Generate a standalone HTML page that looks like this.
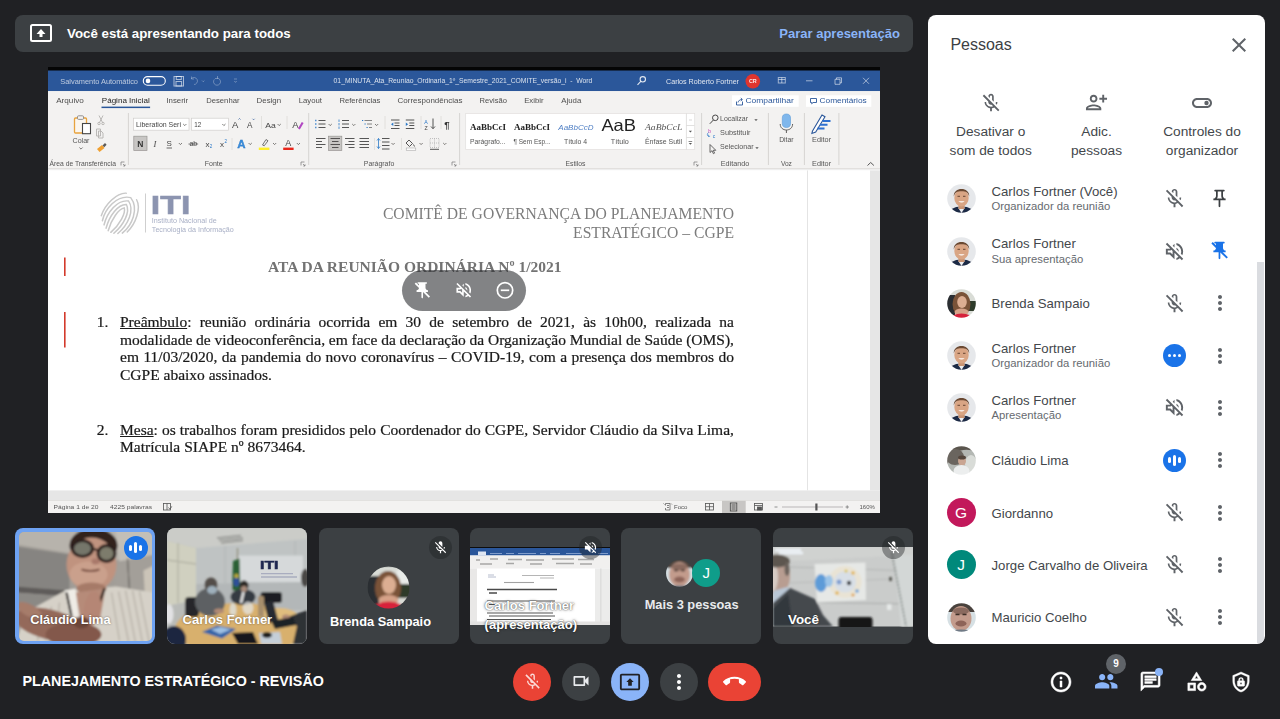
<!DOCTYPE html>
<html lang="pt-BR">
<head>
<meta charset="utf-8">
<title>Meet - PLANEJAMENTO ESTRATÉGICO - REVISÃO</title>
<style>
*{box-sizing:border-box;margin:0;padding:0}
html,body{width:1280px;height:719px;overflow:hidden;background:#202124}
body{position:relative;font-family:"Liberation Sans",sans-serif;color:#fff}
.abs{position:absolute}
/* banner */
#banner{left:15px;top:15px;width:898px;height:37px;background:#3c4043;border-radius:8px}
#banner .t1{left:52px;top:10.500px;font-size:13.300px;font-weight:bold;color:#fff;white-space:nowrap}
#banner .t2{right:13px;top:11px;font-size:13px;font-weight:bold;color:#8ab4f8;white-space:nowrap}
/* word window */
#word{left:48px;top:67px;width:832px;height:446px;background:#fff;overflow:hidden}
/* tiles */
.tile{top:528px;width:140px;height:116px;border-radius:8px;background:#3c4043;overflow:hidden}
.tile .nm{font-weight:bold;font-size:13px;color:#fff;white-space:nowrap;text-shadow:0 0 2px rgba(0,0,0,.5)}
/* bottom bar */
#title{left:22.500px;top:673px;font-size:14.300px;font-weight:bold;color:#fff;white-space:nowrap}
.cbtn{top:663px;width:38px;height:38px;border-radius:19px}
/* panel */
#panel{left:928px;top:15px;width:337px;height:629px;background:#fff;border-radius:8px;color:#202124;overflow:hidden}
.doc{font-family:"Liberation Serif",serif;font-size:15.5px;line-height:17.83px;color:#1a1a1a;white-space:nowrap;-webkit-text-stroke:0.22px #1a1a1a}
.doc .hd{color:#7c7c7c;font-size:15.670px;-webkit-text-stroke:0}
.doc .jl{left:72px;white-space:nowrap}
#pill{left:354px;top:203px;width:124px;height:41px;border-radius:20.5px;background:rgba(40,41,44,.58)}
.badge{width:23px;height:23px;border-radius:12px;background:rgba(32,33,36,.42)}
.pl{top:108px;width:120px;text-align:center;font-size:13.700px;line-height:18.900px;color:#43474b}
.row{left:-1px;width:338px;height:0}
.av{left:19.500px;top:-14.500px;width:29px;height:29px;border-radius:15px;color:#fff;font-size:15.500px;text-align:center;line-height:29.500px}
.rn{left:64.500px;font-size:13.200px;color:#43474b;white-space:nowrap}
.rs{left:64.500px;font-size:11.300px;color:#666a6f;white-space:nowrap}
.dt{top:9.700px;width:3.600px;height:3.600px;border-radius:2px;background:#fff}
.br{width:3px;border-radius:1.500px;background:#fff}

</style>
</head>
<body>
<svg width="0" height="0" style="position:absolute">
<defs>
<symbol id="i-micoff" viewBox="0 0 24 24"><path d="M19 11h-1.700c0 .740-.160 1.430-.430 2.050l1.230 1.230c.560-.980.900-2.090.900-3.280zm-4.020.170c0-.060.020-.110.020-.170V5c0-1.660-1.340-3-3-3S9 3.340 9 5v.180l5.980 5.990zM4.270 3L3 4.270l6.010 6.010V11c0 1.660 1.330 3 2.990 3 .220 0 .440-.030.650-.080l1.660 1.660c-.710.330-1.500.520-2.310.520-2.760 0-5.300-2.100-5.300-5.100H5c0 3.410 2.720 6.230 6 6.720V21h2v-3.280c.910-.130 1.770-.450 2.540-.900L19.730 21 21 19.730 4.270 3z"/></symbol>
<symbol id="i-micoff-o" viewBox="0 0 24 24"><path d="M10.800 4.900c0-.660.540-1.200 1.200-1.200s1.200.540 1.200 1.200l-.010 3.910L15 10.600V5c0-1.660-1.340-3-3-3-1.540 0-2.790 1.160-2.960 2.650l1.760 1.760V4.900zM19 11h-1.700c0 .580-.100 1.130-.270 1.640l1.270 1.270c.440-.880.700-1.870.700-2.910zM4.410 2.860L3 4.270l6 6V11c0 1.660 1.340 3 3 3 .230 0 .440-.030.650-.080l1.660 1.660c-.710.330-1.500.520-2.310.520-2.760 0-5.300-2.100-5.300-5.100H5c0 3.410 2.720 6.230 6 6.720V21h2v-3.280c.910-.130 1.770-.450 2.550-.900l4.200 4.200 1.410-1.410L4.410 2.860z"/></symbol>
<symbol id="i-voloff" viewBox="0 0 24 24"><path d="M16.500 12c0-1.770-1.020-3.290-2.500-4.030v2.210l2.450 2.450c.030-.200.050-.410.050-.630zm2.500 0c0 .940-.200 1.820-.540 2.640l1.510 1.510C20.630 14.910 21 13.500 21 12c0-4.280-2.990-7.860-7-8.770v2.060c2.890.860 5 3.540 5 6.710zM4.270 3L3 4.270 7.730 9H3v6h4l5 5v-6.730l4.250 4.250c-.670.520-1.420.930-2.250 1.180v2.060c1.380-.310 2.630-.950 3.690-1.810L19.730 21 21 19.730l-9-9L4.270 3zM12 4L9.910 6.090 12 8.180V4z"/></symbol>
<symbol id="i-voloff-o" viewBox="0 0 24 24"><path d="M4.340 2.930L2.930 4.340 7.290 8.700 7 9H3v6h4l5 5v-6.590l4.180 4.180c-.650.490-1.380.880-2.180 1.110v2.060c1.340-.300 2.570-.920 3.610-1.750l2.050 2.050 1.410-1.410L4.340 2.930zM10 15.170L7.830 13H5v-2h2.830l.880-.880L10 11.410v3.760zM19 12c0 .820-.150 1.610-.410 2.340l1.530 1.530c.560-1.170.880-2.480.880-3.870 0-4.280-2.990-7.860-7-8.770v2.060c2.890.860 5 3.540 5 6.710zm-7-8l-1.880 1.880L12 7.760zm4.500 8c0-1.770-1.020-3.290-2.500-4.030v1.790l2.480 2.480c.010-.080.020-.160.020-.240z"/></symbol>
<symbol id="i-pin-o" viewBox="0 0 24 24"><path d="M14 4v5c0 1.120.370 2.160 1 3H9c.650-.860 1-1.900 1-3V4h4m3-2H7c-.550 0-1 .450-1 1s.450 1 1 1h1v5c0 1.660-1.340 3-3 3v2h5.970v7l1 1 1-1v-7H19v-2c-1.660 0-3-1.340-3-3V4h1c.550 0 1-.450 1-1s-.450-1-1-1z"/></symbol>
<symbol id="i-pinoff" viewBox="0 0 24 24"><path d="M16 9V4h1c.550 0 1-.450 1-1s-.450-1-1-1H7c-.550 0-1 .450-1 1s.450 1 1 1h1v5c0 1.660-1.340 3-3 3v2h5.970v7l1 1 1-1v-7H19v-2c-1.660 0-3-1.340-3-3z"/><path d="M3.500 3.200L20.800 20.500" stroke="currentColor" stroke-width="2.200" fill="none"/></symbol>
<symbol id="i-more" viewBox="0 0 24 24"><path d="M12 8c1.100 0 2-.900 2-2s-.900-2-2-2-2 .900-2 2 .900 2 2 2zm0 2c-1.100 0-2 .900-2 2s.900 2 2 2 2-.900 2-2-.900-2-2-2zm0 6c-1.100 0-2 .900-2 2s.900 2 2 2 2-.900 2-2-.900-2-2-2z"/></symbol>
<symbol id="i-cam" viewBox="0 0 24 24"><path d="M15 8v8H5V8h10m1-2H4c-.550 0-1 .450-1 1v10c0 .550.450 1 1 1h12c.550 0 1-.450 1-1v-3.500l4 4v-11l-4 4V7c0-.550-.450-1-1-1z"/></symbol>
<symbol id="i-callend" viewBox="0 0 24 24"><path d="M12 9c-1.600 0-3.150.250-4.600.720v3.100c0 .390-.230.740-.560.900-.980.490-1.870 1.120-2.660 1.850-.180.180-.430.280-.700.280-.280 0-.530-.110-.710-.290L.290 13.080c-.180-.170-.290-.420-.290-.700 0-.280.110-.530.290-.710C3.340 8.780 7.460 7 12 7s8.660 1.780 11.710 4.670c.180.180.290.430.290.710 0 .280-.110.530-.290.710l-2.480 2.480c-.180.180-.430.290-.710.290-.270 0-.520-.110-.700-.280-.790-.740-1.690-1.360-2.670-1.850-.330-.160-.560-.500-.560-.900v-3.100C15.150 9.250 13.600 9 12 9z"/></symbol>
<symbol id="i-present" viewBox="0 0 24 24"><path d="M21 3H3c-1.110 0-2 .890-2 2v14c0 1.110.890 2 2 2h18c1.110 0 2-.890 2-2V5c0-1.110-.890-2-2-2zm0 16.020H3V4.980h18v14.040zM10 12H8l4-4 4 4h-2v4h-4v-4z"/></symbol>
<symbol id="i-info" viewBox="0 0 24 24"><path d="M11 7h2v2h-2zm0 4h2v6h-2zm1-9C6.480 2 2 6.480 2 12s4.480 10 10 10 10-4.480 10-10S17.520 2 12 2zm0 18c-4.410 0-8-3.590-8-8s3.590-8 8-8 8 3.590 8 8-3.590 8-8 8z"/></symbol>
<symbol id="i-people" viewBox="0 0 24 24"><path d="M16 11c1.660 0 2.990-1.340 2.990-3S17.660 5 16 5c-1.660 0-3 1.340-3 3s1.340 3 3 3zm-8 0c1.660 0 2.990-1.340 2.990-3S9.660 5 8 5C6.340 5 5 6.340 5 8s1.340 3 3 3zm0 2c-2.330 0-7 1.170-7 3.500V19h14v-2.500c0-2.330-4.670-3.500-7-3.500zm8 0c-.290 0-.620.020-.970.050 1.160.840 1.970 1.970 1.970 3.450V19h6v-2.500c0-2.330-4.670-3.500-7-3.500z"/></symbol>
<symbol id="i-chat" viewBox="0 0 24 24"><path d="M4 4h16v12H5.170L4 17.170V4m0-2c-1.100 0-1.990.900-1.990 2L2 22l4-4h14c1.100 0 2-.900 2-2V4c0-1.100-.900-2-2-2H4zm2 10h8v2H6v-2zm0-3h12v2H6V9zm0-3h12v2H6V6z"/></symbol>
<symbol id="i-cat" viewBox="0 0 24 24"><path d="M12 2l-5.500 9h11L12 2zm0 3.840L13.930 9h-3.870L12 5.840zM17.500 13c-2.490 0-4.500 2.010-4.500 4.500s2.010 4.500 4.500 4.500 4.500-2.010 4.500-4.500-2.010-4.500-4.500-4.500zm0 7c-1.380 0-2.500-1.120-2.500-2.500s1.120-2.500 2.500-2.500 2.500 1.120 2.500 2.500-1.120 2.500-2.500 2.500zM3 21.500h8v-8H3v8zm2-6h4v4H5v-4z"/></symbol>
<symbol id="i-shield" viewBox="0 0 24 24"><path d="M12 1L3 5v6c0 5.550 3.840 10.740 9 12 5.160-1.260 9-6.450 9-12V5l-9-4zm0 2.180l7 3.120V11c0 4.520-2.980 8.690-7 9.930C7.980 19.690 5 15.520 5 11V6.300l7-3.120z"/><path d="M15 10.500h-.400V9.600a2.600 2.600 0 0 0-5.200 0v.900H9c-.550 0-1 .450-1 1v4c0 .550.450 1 1 1h6c.550 0 1-.450 1-1v-4c0-.550-.450-1-1-1zm-3 4a1 1 0 1 1 0-2 1 1 0 0 1 0 2zm1.300-4h-2.600V9.600a1.300 1.300 0 0 1 2.600 0v.900z"/></symbol>
<symbol id="i-close" viewBox="0 0 24 24"><path d="M19 6.410L17.590 5 12 10.590 6.410 5 5 6.410 10.590 12 5 17.590 6.410 19 12 13.410 17.590 19 19 17.590 13.410 12z"/></symbol>
<symbol id="i-padd" viewBox="0 0 24 24"><path d="M9 12c2.210 0 4-1.790 4-4s-1.790-4-4-4-4 1.790-4 4 1.790 4 4 4zm0-6c1.100 0 2 .900 2 2s-.900 2-2 2-2-.900-2-2 .900-2 2-2zm0 8c-2.670 0-8 1.340-8 4v2h16v-2c0-2.660-5.330-4-8-4zm-6 4c.220-.720 3.310-2 6-2 2.700 0 5.800 1.290 6 2H3zM20 7V4h-2v3h-3v2h3v3h2V9h3V7h-3z"/></symbol>
<symbol id="i-toggle" viewBox="0 0 24 24"><path d="M17 7H7c-2.760 0-5 2.240-5 5s2.240 5 5 5h10c2.760 0 5-2.240 5-5s-2.240-5-5-5zm0 8H7c-1.660 0-3-1.340-3-3s1.340-3 3-3h10c1.660 0 3 1.340 3 3s-1.340 3-3 3z"/><circle cx="16.500" cy="12" r="2.200"/></symbol>
<filter id="b1" x="-10%" y="-10%" width="120%" height="120%"><feGaussianBlur stdDeviation="1"/></filter>
<filter id="b2" x="-10%" y="-10%" width="120%" height="120%"><feGaussianBlur stdDeviation="2"/></filter>
<filter id="b3" x="-10%" y="-10%" width="120%" height="120%"><feGaussianBlur stdDeviation="3.500"/></filter>
<filter id="b05" x="-10%" y="-10%" width="120%" height="120%"><feGaussianBlur stdDeviation="0.600"/></filter>
</defs></svg>
<div id="banner" class="abs">
  <svg class="abs" style="left:15px;top:9px" width="22" height="18" viewBox="0 0 22 18"><rect x="1" y="1" width="20" height="16" rx="1.5" fill="none" stroke="#fff" stroke-width="2"/><path d="M11 5 L6.5 10 H9.5 V13 H12.5 V10 H15.5 Z" fill="#fff"/></svg>
  <div class="abs t1">Você está apresentando para todos</div>
  <div class="abs t2">Parar apresentação</div>
</div>

<div id="word" class="abs">
<svg class="abs" style="left:0;top:0" width="832" height="446" viewBox="0 0 832 446" font-family="Liberation Sans, sans-serif">
  <defs>
    <filter id="soft" x="-5%" y="-5%" width="110%" height="110%"><feGaussianBlur stdDeviation="0.35"/></filter>
    <g id="dd"><path d="M0 0 l1.6 1.6 l1.6 -1.6" fill="none" stroke="#605e5c" stroke-width=".8"/></g>
    <g id="lines4"><path d="M0 0h10M0 3h10M0 6h10M0 9h10" stroke="#444" stroke-width="1.1"/></g>
  </defs>
  <rect x="0" y="0" width="832" height="4" fill="#050505"/>
  <rect x="0" y="3.5" width="832" height="20.7" fill="#2b579a"/>
  <rect x="0" y="24.2" width="832" height="77.3" fill="#f3f2f1"/>
  <rect x="0" y="101.2" width="832" height="1" fill="#dcdad8"/>
  <rect x="0" y="102.2" width="832" height="1.2" fill="#ececeb"/>
  <g filter="url(#soft)">
  <!-- title bar -->
  <g fill="#fff" font-size="7.3">
    <text x="12.3" y="16.5" textLength="77.7" lengthAdjust="spacingAndGlyphs" fill-opacity=".68">Salvamento Automático</text>
    <rect x="95.3" y="9.6" width="22" height="8.6" rx="4.3" fill="none" stroke="#fff" stroke-width="1.1"/>
    <circle cx="100" cy="13.9" r="2.3" fill="#fff"/>
    <g fill="none" stroke="#fff" stroke-opacity=".6" stroke-width="1"><rect x="126" y="9.5" width="9.5" height="9.5"/><rect x="128.3" y="9.5" width="5" height="3"/><rect x="128" y="14.5" width="5.6" height="4.5"/></g>
    <g fill="none" stroke="#fff" stroke-opacity=".3" stroke-width="1"><path d="M146 17.5 a3.5 3.5 0 1 0 -2.5 -6 M143.5 9.5 v2.5 h2.5"/><path d="M154 13.5l1.2 1.2 1.2-1.2"/><path d="M169 11.2 a3.5 3.5 0 1 1 -2.6 1.2 M169.5 9 v2.5 h-2.5"/><path d="M186 12h3M186.3 14l1.2 1.4 1.2-1.4"/></g>
    <text x="285.6" y="16.3" textLength="258.8" lengthAdjust="spacingAndGlyphs" fill-opacity=".82" font-size="6.6">01_MINUTA_Ata_Reuniao_Ordinaria_1º_Semestre_2021_COMITE_versão_i&#160;&#160;-&#160;&#160;Word</text>
    <g fill="none" stroke="#fff" stroke-opacity=".85" stroke-width="1.1"><circle cx="594.8" cy="12.3" r="2.7"/><path d="M592.8 14.4l-3.3 3.4"/></g>
    <text x="618" y="17" textLength="73" lengthAdjust="spacingAndGlyphs" fill-opacity=".85" font-size="7.2">Carlos Roberto Fortner</text>
    <circle cx="704.8" cy="14.3" r="7.3" fill="#e0342f"/>
    <text x="704.8" y="16.4" text-anchor="middle" font-size="5.4" font-weight="bold" fill-opacity=".9">CR</text>
    <g fill="none" stroke="#fff" stroke-opacity=".55" stroke-width="1"><rect x="730.3" y="10.5" width="7" height="5.5"/><path d="M730.3 12.5h7M733.8 10.5v5.5"/><path d="M758 13.8h6.5"/><path d="M787 12.3h5v5h-5zM788.5 12.3v-1.5h5v5h-1.5"/><path d="M815 10.8l6 6M821 10.8l-6 6"/></g>
  </g>
  <!-- menu tabs -->
  <g fill="#4e4e4e" font-size="8">
    <text x="8.2" y="36.4" textLength="27.6" lengthAdjust="spacingAndGlyphs">Arquivo</text>
    <text x="53.8" y="36.4" textLength="47.9" lengthAdjust="spacingAndGlyphs" fill="#222">Página Inicial</text>
    <rect x="53.5" y="39.6" width="48.6" height="1.5" fill="#2b579a"/>
    <text x="118.4" y="36.4" textLength="21.8" lengthAdjust="spacingAndGlyphs">Inserir</text>
    <text x="158.2" y="36.4" textLength="33.3" lengthAdjust="spacingAndGlyphs">Desenhar</text>
    <text x="208.6" y="36.4" textLength="24.5" lengthAdjust="spacingAndGlyphs">Design</text>
    <text x="250.7" y="36.4" textLength="23.3" lengthAdjust="spacingAndGlyphs">Layout</text>
    <text x="291.4" y="36.4" textLength="41" lengthAdjust="spacingAndGlyphs">Referências</text>
    <text x="349.6" y="36.4" textLength="64.8" lengthAdjust="spacingAndGlyphs">Correspondências</text>
    <text x="431.6" y="36.4" textLength="27.4" lengthAdjust="spacingAndGlyphs">Revisão</text>
    <text x="476.2" y="36.4" textLength="19.4" lengthAdjust="spacingAndGlyphs">Exibir</text>
    <text x="513.3" y="36.4" textLength="20" lengthAdjust="spacingAndGlyphs">Ajuda</text>
    <rect x="684" y="28.3" width="66.7" height="11.5" fill="#fff"/>
    <rect x="758" y="28.3" width="65.3" height="11.5" fill="#fff"/>
    <g fill="none" stroke="#2b579a" stroke-width=".9"><path d="M688.5 34.5v3.5h6v-3.5M690 35.5c.5-2 2-3 4-3M692.8 31l1.6 1.5-1.6 1.5"/><path d="M762.5 31.5h6v4h-3.5l-1.3 1.3v-1.3h-1.2z"/></g>
    <text x="697.5" y="36.4" textLength="48.3" lengthAdjust="spacingAndGlyphs" fill="#2b579a">Compartilhar</text>
    <text x="771.5" y="36.4" textLength="47.2" lengthAdjust="spacingAndGlyphs" fill="#2b579a">Comentários</text>
  </g>
  <!-- ribbon group separators -->
  <g stroke="#d6d4d2" stroke-width="1"><path d="M80.4 46v52M260.7 46v52M411.6 46v52M653.6 46v52M720.4 46v52M756.4 46v52M790.9 46v52"/></g>
  <!-- group labels -->
  <g fill="#555" font-size="6.8">
    <text x="1.6" y="99" textLength="66.4" lengthAdjust="spacingAndGlyphs">Área de Transferência</text>
    <text x="165.7" y="99" text-anchor="middle" textLength="18" lengthAdjust="spacingAndGlyphs">Fonte</text>
    <text x="331" y="99" text-anchor="middle" textLength="30.5" lengthAdjust="spacingAndGlyphs">Parágrafo</text>
    <text x="527.5" y="99" text-anchor="middle" textLength="20" lengthAdjust="spacingAndGlyphs">Estilos</text>
    <text x="687" y="99" text-anchor="middle" textLength="28.5" lengthAdjust="spacingAndGlyphs">Editando</text>
    <text x="738.4" y="99" text-anchor="middle" textLength="11" lengthAdjust="spacingAndGlyphs">Voz</text>
    <text x="773.6" y="99" text-anchor="middle" textLength="19" lengthAdjust="spacingAndGlyphs">Editor</text>
    <g fill="none" stroke="#777" stroke-width=".7"><path d="M73 95h3.5M73 95v3.5M75 97l2 2M77 97.3v1.7h-1.7"/><path d="M253 95h3.5M253 95v3.5M255 97l2 2M257 97.3v1.7h-1.7"/><path d="M404 95h3.5M404 95v3.5M406 97l2 2M408 97.3v1.7h-1.7"/><path d="M646 95h3.5M646 95v3.5M648 97l2 2M650 97.3v1.7h-1.7"/></g>
    <path d="M819.5 98.5l3.2-3 3.2 3" fill="none" stroke="#555" stroke-width="1"/>
  </g>
  <!-- clipboard group -->
  <g>
    <rect x="26.5" y="51" width="12" height="15" rx="1" fill="#fbf6ee" stroke="#e8a33d" stroke-width="1.3"/>
    <rect x="29.5" y="48.8" width="6" height="3.6" rx="1" fill="#f3f2f1" stroke="#8a8886" stroke-width=".9"/>
    <rect x="34.5" y="56.5" width="8" height="10.2" fill="#fff" stroke="#444" stroke-width="1.1"/>
    <text x="33" y="75.500" text-anchor="middle" font-size="7.2" fill="#555" textLength="17" lengthAdjust="spacingAndGlyphs">Colar</text>
    <use href="#dd" x="31.4" y="80.500"/>
    <g fill="none" stroke="#b4b2b0" stroke-width=".9"><path d="M51 48.5l3.5 7M55 48.5l-3.5 7"/><circle cx="51" cy="56.5" r="1.2"/><circle cx="55" cy="56.5" r="1.2"/><path d="M48.5 62h4v7h-4zM50.5 64h2.5l2 2v5h-4.5z" fill="#f3f2f1"/></g>
    <path d="M49 82l5-4 2.5 3-5 4z" fill="#f0a030"/><path d="M54.5 78.5l2.5-2.5 1.6 1.8-2.3 2.5z" fill="#5b5a58"/>
  </g>
  <!-- font group -->
  <g font-size="7.2" fill="#444">
    <rect x="85.5" y="51.2" width="55.5" height="12" fill="#fff" stroke="#d0cecc" stroke-width=".7"/>
    <rect x="143.6" y="51.2" width="36.8" height="12" fill="#fff" stroke="#d0cecc" stroke-width=".7"/>
    <text x="88" y="60" textLength="45" lengthAdjust="spacingAndGlyphs">Liberation Seri</text><use href="#dd" x="135.2" y="57"/>
    <text x="146.3" y="60" textLength="7" lengthAdjust="spacingAndGlyphs">12</text><use href="#dd" x="174.3" y="57"/>
    <text x="184" y="61" font-size="9.5">A</text><path d="M190.5 52.5l1 -1 1 1" fill="none" stroke="#2b579a" stroke-width=".7"/>
    <text x="199" y="61" font-size="8.2">A</text><path d="M204.6 51.8l1 1 1-1" fill="none" stroke="#2b579a" stroke-width=".7"/>
    <path d="M213.5 49v13M239 49v13" stroke="#dcdad8" stroke-width=".8"/>
    <text x="217.3" y="60.5" font-size="7.6" textLength="10.5" lengthAdjust="spacingAndGlyphs">Aa</text><use href="#dd" x="229.6" y="57"/>
    <text x="244.3" y="61" font-size="9.5">A</text><path d="M250 61.5l3.8-6.5 1.8 1-3.8 6.5z" fill="#b146c2"/>
    <rect x="85.8" y="69.2" width="13.2" height="14.3" fill="#c8c6c4" stroke="#979593" stroke-width=".7"/>
    <text x="92.4" y="79.6" text-anchor="middle" font-weight="bold" font-size="8.5" fill="#333">N</text>
    <text x="106.8" y="79.6" text-anchor="middle" font-style="italic" font-size="8.5" font-family="Liberation Serif, serif">I</text>
    <text x="121.2" y="79" text-anchor="middle" font-size="8">S</text><path d="M118.6 81h5.4" stroke="#444" stroke-width=".8"/><use href="#dd" x="130.8" y="76"/>
    <text x="145.3" y="79.3" text-anchor="middle" font-size="7">ab</text><path d="M140.5 77h9.6" stroke="#444" stroke-width=".7"/>
    <text x="157.4" y="79.5" font-size="8">x</text><text x="161.8" y="81.3" font-size="4.5" fill="#2b79c8">2</text>
    <text x="172" y="79.5" font-size="8">x</text><text x="176.4" y="75.5" font-size="4.5" fill="#2b79c8">2</text>
    <path d="M184 71v12" stroke="#dcdad8" stroke-width=".8"/>
    <text x="193.3" y="81" text-anchor="middle" font-size="11.5" font-weight="bold" fill="#3b8edb" stroke="#1f6fc0" stroke-width=".3">A</text><use href="#dd" x="200.6" y="76"/>
    <path d="M214.5 78l3.5-5.5 2 1.3-3.8 5z" fill="none" stroke="#555" stroke-width=".8"/><rect x="210.8" y="80.6" width="10.6" height="2.4" fill="#ffef2a"/><use href="#dd" x="225" y="76"/>
    <text x="240.3" y="79.3" text-anchor="middle" font-size="9">A</text><rect x="235.2" y="80.6" width="10.4" height="2.4" fill="#e8271a"/><use href="#dd" x="248.8" y="76"/>
  </g>
  <!-- paragraph group -->
  <g fill="none" stroke="#444" stroke-width=".9">
    <path d="M270.5 53.5h7M270.5 57h7M270.5 60.5h7"/><path d="M267.2 53.5h1.2M267.2 57h1.2M267.2 60.5h1.2" stroke="#2b79c8" stroke-width="1.3"/><use href="#dd" x="280.6" y="57"/>
    <path d="M294 53.5h7M294 57h7M294 60.5h7"/><path d="M291 52.5v2.4M291 56v2.4M291 59.5v2.4" stroke="#2b79c8" stroke-width=".8"/><use href="#dd" x="304.2" y="57"/>
    <path d="M316.5 53.5h7.5M319 57h5M321 60.5h3" stroke="#777"/><path d="M314 53.5h1.2M316.5 57h1.2M318.5 60.5h1.2" stroke="#2b79c8" stroke-width="1.2"/><use href="#dd" x="327" y="57"/>
    <path d="M337 49v13M373 49v13M393 49v13" stroke="#dcdad8" stroke-width=".8"/>
    <path d="M343 53h8.5M346.5 56h5M346.5 58.5h5M343 61.5h8.5"/><path d="M345.3 55.5l-2.3 1.8 2.3 1.8z" fill="#2b79c8" stroke="none"/>
    <path d="M357.8 53h8.5M361.3 56h5M361.3 58.5h5M357.8 61.5h8.5"/><path d="M357.8 55.5l2.3 1.8-2.3 1.8z" fill="#2b79c8" stroke="none"/>
    <path d="M385 51.5v10M383 59.5l2 2.2 2-2.2"/>
    <text x="376.3" y="56.5" font-size="5.2" fill="#2b79c8" stroke="none">A</text><text x="376.5" y="62.5" font-size="5.2" fill="#444" stroke="none">Z</text>
    <text x="396.2" y="61.2" font-size="9.5" fill="#333" stroke="none" font-weight="bold">¶</text>
    <rect x="280.6" y="69.2" width="13.2" height="14.3" fill="#c8c6c4" stroke="#979593" stroke-width=".7"/>
    <path d="M268 71.5h9.5M268 74.5h6M268 77.5h9.5M268 80.5h6"/>
    <path d="M282.5 71.5h9.5M284 74.5h6.5M282.5 77.5h9.5M284 80.5h6.5"/>
    <path d="M297 71.5h9.5M300.5 74.5h6M297 77.5h9.5M300.5 80.5h6"/>
    <path d="M311.5 71.5h9.500M311.5 74.5h9.500M311.5 77.500h9.500M311.5 80.500h9.500"/>
    <path d="M326.5 71v12" stroke="#dcdad8" stroke-width=".8"/>
    <path d="M334 71.500h7.500M334 75h7.500M334 78.500h7.500M334 82h7.500"/><path d="M330.500 71.500v10M329 73.500l1.500-2 1.500 2M329 79.500l1.500 2 1.500-2" stroke="#2b79c8" stroke-width=".8"/><use href="#dd" x="343.500" y="76"/>
    <path d="M353.500 71v12" stroke="#dcdad8" stroke-width=".8"/>
    <path d="M361 73l3.500 3.500-3 3-3.500-3.500zM365.500 77.500l1 2"/><rect x="358.200" y="81" width="9.600" height="2.200" fill="#fff" stroke="#999" stroke-width=".5"/><use href="#dd" x="371.500" y="76"/>
    <path d="M382 71.500h9v9h-9z" stroke="#aaa" stroke-dasharray="1 1" stroke-width=".7"/><path d="M386.500 71.500v9M382 76h9" stroke="#aaa" stroke-dasharray="1 1" stroke-width=".7"/><path d="M382 82.300h9" stroke="#444"/><use href="#dd" x="395.200" y="76"/>
  </g>
  <!-- styles gallery -->
  <g>
    <rect x="417.7" y="46.500" width="229" height="36" fill="#fff" stroke="#e1dfdd" stroke-width=".7"/>
    <path d="M638.400 46.500v36M638.400 58.500h8M638.400 70.500h8" stroke="#d6d4d2" stroke-width=".7" fill="none"/>
    <path d="M641 53h3" stroke="#c8c6c4" stroke-width=".7"/><path d="M640.800 63.800l1.600 1.800 1.600-1.800z" fill="#555"/><path d="M640.600 74.500h3.600" stroke="#555" stroke-width=".7"/><path d="M640.800 76l1.600 1.800 1.600-1.800z" fill="#555"/>
    <g font-family="Liberation Serif, serif" fill="#222">
      <text x="422" y="62.600" font-size="9.200" font-weight="bold" textLength="36" lengthAdjust="spacingAndGlyphs">AaBbCcI</text>
      <text x="466" y="62.600" font-size="9.200" font-weight="bold" textLength="36" lengthAdjust="spacingAndGlyphs">AaBbCcI</text>
      <text x="597" y="62.600" font-size="9.200" font-style="italic" fill="#555" textLength="37.300" lengthAdjust="spacingAndGlyphs">AaBbCcL</text>
    </g>
    <text x="510.300" y="62.600" font-size="8" font-style="italic" fill="#4f7fc4" textLength="35.200" lengthAdjust="spacingAndGlyphs">AaBbCcD</text>
    <text x="553.400" y="64" font-size="16.500" fill="#222" textLength="34.600" lengthAdjust="spacingAndGlyphs">AaB</text>
    <g font-size="6.600" fill="#555">
      <text x="422" y="77" textLength="35.500" lengthAdjust="spacingAndGlyphs">Parágrafo...</text>
      <text x="465.500" y="77" textLength="37" lengthAdjust="spacingAndGlyphs">¶ Sem Esp...</text>
      <text x="527.500" y="77" text-anchor="middle" textLength="23" lengthAdjust="spacingAndGlyphs">Título 4</text>
      <text x="571.800" y="77" text-anchor="middle" textLength="18" lengthAdjust="spacingAndGlyphs">Título</text>
      <text x="615.500" y="77" text-anchor="middle" textLength="37" lengthAdjust="spacingAndGlyphs">Ênfase Sutil</text>
    </g>
  </g>
  <!-- editing group -->
  <g font-size="7.200" fill="#555">
    <g fill="none" stroke="#444" stroke-width="1"><circle cx="667.300" cy="50.800" r="2.800"/><path d="M665.400 53l-3.600 3.800"/></g>
    <text x="672" y="54.400" textLength="28" lengthAdjust="spacingAndGlyphs">Localizar</text><path d="M706.300 52.300l1.700 1.800 1.700-1.800z" fill="#555"/>
    <text x="660.200" y="66" font-size="5" fill="#c23bb0">b</text><text x="664.800" y="70.600" font-size="5" fill="#2b79c8">c</text><path d="M660.500 69.500c-1.500-1-1.500-3 0-4M660.500 69.500l-.2-1.800M660.500 69.500l1.600-.3" stroke="#2b79c8" stroke-width=".7" fill="none"/>
    <text x="672" y="68.400" textLength="30.500" lengthAdjust="spacingAndGlyphs">Substituir</text>
    <path d="M662 77.500v8l2-1.800 1.400 3 1.200-.6-1.400-2.800h2.600z" fill="none" stroke="#444" stroke-width=".8"/>
    <text x="672" y="82.200" textLength="33.500" lengthAdjust="spacingAndGlyphs">Selecionar</text><path d="M707.300 80.200l1.700 1.800 1.700-1.800z" fill="#555"/>
  </g>
  <!-- voice / editor -->
  <g font-size="7.200" fill="#555">
    <rect x="734.300" y="47" width="8.200" height="13.500" rx="4.100" fill="#7fb7ec" stroke="#5a9bd8" stroke-width=".6"/>
    <path d="M732.200 57c0 8 12.400 8 12.400 0M738.400 63v3" fill="none" stroke="#605e5c" stroke-width="1"/>
    <text x="738.400" y="74.700" text-anchor="middle" textLength="14.500" lengthAdjust="spacingAndGlyphs">Ditar</text>
    <path d="M764.500 64l9.500-16 3 1.800-9.300 15.200-3.800 1.400z" fill="#fff" stroke="#2b579a" stroke-width="1.100"/>
    <path d="M774.500 54h8M772 57.800h7.500M769.500 61.600h7" stroke="#2f6fd0" stroke-width="2"/>
    <text x="773.600" y="74.700" text-anchor="middle" textLength="19" lengthAdjust="spacingAndGlyphs">Editor</text>
  </g>

  </g>
  <!-- document area -->
  <rect x="0" y="103.4" width="832" height="320" fill="#fff"/>
  <rect x="759" y="103.4" width="1" height="320" fill="#e4e4e4"/>
  <rect x="822" y="103.4" width="10" height="320" fill="#e6e6e6"/>
  <rect x="0" y="423.4" width="832" height="10" fill="#e6e6e6"/>
  <rect x="0" y="433.2" width="832" height="12.8" fill="#f3f2f1"/>
  <rect x="0" y="433" width="832" height=".6" fill="#d8d6d4"/>
  <!-- status bar -->
  <g filter="url(#soft)" font-size="5.800" fill="#555">
    <text x="5.600" y="442" textLength="44.800" lengthAdjust="spacingAndGlyphs">Página 1 de 20</text>
    <text x="62" y="442" textLength="42" lengthAdjust="spacingAndGlyphs">4225 palavras</text>
    <g fill="none" stroke="#555" stroke-width=".8"><rect x="115.500" y="436.500" width="7" height="6.500"/><path d="M119 436.500v6.500M120.500 440.500l1.500 1.800 1.800-3"/></g>
    <g fill="none" stroke="#555" stroke-width=".7"><path d="M617.500 436.500h4.500v6.500h-4.500M617.500 436.500v2M617.500 441v2M619 438.500h2M619 440.500h2"/><path d="M623 436.500l1 1M615.500 436.500l1 1"/></g>
    <text x="626" y="442.200" textLength="13.500" lengthAdjust="spacingAndGlyphs">Foco</text>
    <g fill="none" stroke="#555" stroke-width=".8"><rect x="657.500" y="436.500" width="8" height="6.500"/><path d="M661.500 436.500v6.500M657.500 439.700h8"/></g>
    <rect x="674" y="433.800" width="23.700" height="12.200" fill="#c8c6c4"/>
    <g fill="none" stroke="#444" stroke-width=".8"><rect x="682.300" y="436" width="6.500" height="8"/><path d="M683.600 438h4M683.600 440h4M683.600 442h4"/></g>
    <g fill="none" stroke="#555" stroke-width=".8"><rect x="706.500" y="436.500" width="8" height="6.500"/><path d="M706.500 438.500h8"/><rect x="709.500" y="440" width="4" height="3" fill="#555"/></g>
    <path d="M726.500 440h3M797.500 440h3.400M799.200 438.300v3.400" stroke="#777" stroke-width=".8" fill="none"/>
    <path d="M734 440h61" stroke="#a19f9d" stroke-width=".7"/><rect x="767.300" y="436.500" width="2.200" height="7" fill="#555"/>
    <text x="811.500" y="442" textLength="15.300" lengthAdjust="spacingAndGlyphs">160%</text>
  </g>
  <!-- revision bars -->
  <rect x="16" y="190.500" width="1.600" height="18.500" fill="#d33a2c"/>
  <rect x="16" y="245" width="1.600" height="35.500" fill="#d33a2c"/>
  <!-- ITI logo -->
  <g filter="url(#soft)">
    <g fill="none" stroke="#c9c9c9" stroke-linecap="round" transform="translate(71.500 148.500) rotate(32) scale(1.02 .9)" stroke-width="1.500">
      <path d="M-8 18 C-12 4 -10 -14 0 -19 C10 -14 12 4 8 18"/>
      <path d="M-4.500 20 C-8.500 6 -7 -10 0 -14.500 C7 -10 8.500 6 4.500 20"/>
      <path d="M-1.500 21 C-5 8 -4 -6 0 -10 C4 -6 5 8 1.500 21"/>
      <path d="M-11.500 15 C-15.500 2 -13 -18 0 -23.500 C13 -18 15.500 2 11.500 15"/>
      <path d="M-15 11 C-18 -2 -14 -20 -6 -25 M6 -25 C14 -20 18 -2 15 11"/>
    </g>
    <rect x="97.200" y="126.500" width=".8" height="39" fill="#c4c4c4"/>
    <text x="102.800" y="146.800" font-size="26.500" font-weight="bold" fill="#8c94b0" textLength="39.500" lengthAdjust="spacingAndGlyphs" stroke="#8c94b0" stroke-width=".6">ITI</text>
    <text x="103.800" y="155.800" font-size="7.600" fill="#a9b0c6" textLength="65" lengthAdjust="spacingAndGlyphs">Instituto Nacional de</text>
    <text x="103.800" y="164.600" font-size="7.600" fill="#a9b0c6" textLength="82" lengthAdjust="spacingAndGlyphs">Tecnologia da Informação</text>
  </g>

</svg>
<div class="abs doc" style="left:0;top:0;width:832px;height:446px">
  <div class="abs hd" style="right:146px;top:138.300px;text-align:right">COMITÊ DE GOVERNANÇA DO PLANEJAMENTO</div>
  <div class="abs hd" style="right:146px;top:156.900px;text-align:right">ESTRATÉGICO – CGPE</div>
  <div class="abs hd" style="left:220px;top:191.300px;font-weight:bold;color:#737373;font-size:15.500px;-webkit-text-stroke:0">ATA DA REUNIÃO ORDINÁRIA Nº 1/2021</div>
  <div class="abs" style="left:48.700px;top:245.800px">1.</div>
  <div class="abs jl" style="top:245.800px;word-spacing:4.35px"><u>Preâmbulo</u>: reunião ordinária ocorrida em 30 de setembro de 2021, às 10h00, realizada na</div>
  <div class="abs jl" style="top:263.630px;word-spacing:-0.1px">modalidade de videoconferência, em face da declaração da Organização Mundial de Saúde (OMS),</div>
  <div class="abs jl" style="top:281.460px;word-spacing:0.6px">em 11/03/2020, da pandemia do novo coronavírus – COVID-19, com a presença dos membros do</div>
  <div class="abs" style="left:72px;top:299.300px">CGPE abaixo assinados.</div>
  <div class="abs" style="left:48.700px;top:353.600px">2.</div>
  <div class="abs jl" style="top:353.600px;word-spacing:0.17px"><u>Mesa</u>: os trabalhos foram presididos pelo Coordenador do CGPE, Servidor Cláudio da Silva Lima,</div>
  <div class="abs" style="left:72px;top:371.430px">Matrícula SIAPE nº 8673464.</div>
</div>
<div class="abs" id="pill">
  <svg width="124" height="41" viewBox="0 0 124 41"><svg x="10.500" y="10.500" width="19.500" height="19.500" viewBox="0 0 24 24" fill="#fff" color="#fff"><use href="#i-pinoff"/></svg><svg x="52" y="10.500" width="19.500" height="19.500" viewBox="0 0 24 24" fill="#fff"><use href="#i-voloff-o"/></svg><circle cx="103" cy="20.300" r="7.700" fill="none" stroke="#fff" stroke-width="1.700"/><path d="M98.800 20.300h8.400" stroke="#fff" stroke-width="1.700"/></svg>
</div>


</div>

<!-- tile 1: Cláudio Lima (speaking) -->
<div class="abs tile" style="left:15px;background:#6ea2f2">
  <svg class="abs" style="left:3.500px;top:3.500px;border-radius:5px" width="133" height="109" viewBox="3.500 3.500 133 109">
    <rect x="0" y="0" width="140" height="116" fill="#a19d97"/>
    <g filter="url(#b1)">
      <polygon points="0,0 140,0 140,24 100,32 0,16" fill="#b7b3ac"/>
      <polygon points="100,0 140,0 140,30 104,34" fill="#c3bfb7"/>
      <polygon points="0,18 54,26 54,62 0,58" fill="#868481"/>
      <polygon points="0,58 54,62 52,68 0,64" fill="#5e5c5a"/>
      <polygon points="0,64 52,68 50,82 0,80" fill="#8b8985"/>
      <polygon points="98,34 140,26 140,70 100,64" fill="#a39f99"/>
      <polygon points="112,30 114,62" stroke="#6e6b67" stroke-width="1" fill="none"/>
      <polygon points="128,42 140,36 140,116 132,116" fill="#cbc4b8"/>
      <!-- shirt -->
      <polygon points="10,84 50,62 100,58 138,64 140,116 0,116" fill="#d6d1c8"/>
      <!-- hair -->
      <ellipse cx="78" cy="17" rx="24" ry="17" fill="#30241f"/>
      <!-- face -->
      <ellipse cx="76" cy="36" rx="25" ry="27" fill="#c0937f"/>
      <ellipse cx="73" cy="46" rx="19" ry="13" fill="#caa08c"/>
      <ellipse cx="76" cy="60" rx="15" ry="6" fill="#a67a68"/>
      <path d="M66 41q9 3 18 0" stroke="#7a4f42" stroke-width="2" fill="none"/>
      <ellipse cx="80" cy="33" rx="4" ry="3" fill="#a9796a"/>
      <!-- collar / neck -->
      <polygon points="60,64 90,60 84,94 66,96" fill="#b68b79"/>
      <polygon points="49,62 60,60 63,88 55,92" fill="#efece6"/>
      <!-- glasses -->
      <ellipse cx="67" cy="20" rx="10" ry="8" fill="#75766a" stroke="#2a1f1a" stroke-width="3"/>
      <ellipse cx="91" cy="25" rx="8.500" ry="8" fill="#7d7b6c" stroke="#2a1f1a" stroke-width="3"/>
      <path d="M77 20 L83 22" stroke="#2a1f1a" stroke-width="2.200"/>
      <!-- lanyard -->
      <path d="M51 64 L56 88 M89 60 L82 80" stroke="#26221f" stroke-width="2.400" fill="none"/>
      <!-- stripes -->
      <g stroke="#b8b2a8" stroke-width="1.300"><path d="M96 64l8 48M103 63l10 50M110 62l10 52M117 62l10 52M124 63l10 52M36 78l-6 34M44 74l-4 38M28 82l-6 30"/></g>
      <!-- hands -->
      <ellipse cx="34" cy="96" rx="36" ry="15" fill="#94695a" transform="rotate(14 34 96)"/>
      <ellipse cx="14" cy="82" rx="14" ry="6" fill="#a67b6a" transform="rotate(28 14 82)"/>
      <ellipse cx="77" cy="80" rx="8.500" ry="17" fill="#b58674" transform="rotate(8 77 80)"/>
      <ellipse cx="58" cy="106" rx="28" ry="12" fill="#83594b"/>
      <ellipse cx="66" cy="94" rx="8" ry="6" fill="#6d463b"/>
    </g>
  </svg>
  <div class="abs" style="left:108.500px;top:7.500px;width:24px;height:24px;border-radius:12px;background:#1a73e8"></div>
  <div class="abs" style="left:114.200px;top:16.600px;width:3px;height:6px;border-radius:1.500px;background:#fff"></div>
  <div class="abs" style="left:119px;top:14px;width:3.200px;height:11px;border-radius:1.600px;background:#fff"></div>
  <div class="abs" style="left:124px;top:16.600px;width:3px;height:6px;border-radius:1.500px;background:#fff"></div>
  <div class="abs nm" style="left:15.200px;top:84.300px;font-size:12.800px">Cláudio Lima</div>
</div>

<!-- tile 2: Carlos Fortner (room) -->
<div class="abs tile" style="left:167px">
  <svg class="abs" style="left:0;top:0" width="140" height="116" viewBox="0 0 140 116">
    <rect width="140" height="116" fill="#bfc3c3"/>
    <g filter="url(#b1)">
      <polygon points="0,0 140,0 140,11 30,20 0,13" fill="#cbccc8"/>
      <path d="M50 10l24-2.500M52 12.500l24-2.500M54 15l22-2.500" stroke="#8f908d" stroke-width="1.300"/>
      <polygon points="0,13 29,20 29,72 0,78" fill="#d0d0c0"/>
      <path d="M0 32L29 36M11 15v60" stroke="#b4b4a6" stroke-width="1.300"/>
      <polygon points="0,78 29,72 29,96 0,100" fill="#b9bbb8"/>
      <path d="M58 18v40M128 13v45" stroke="#b0b4b4" stroke-width="1"/>
      <rect x="72" y="27.500" width="64" height="26.500" fill="#d6d9da"/>
      <polygon points="29,56 140,54 140,82 29,84" fill="#b3b7b8"/>
      <!-- flag -->
      <path d="M70.500 20v46" stroke="#8d8a78" stroke-width="1.200"/>
      <polygon points="66,33 72.500,30.500 73.500,64 65,62" fill="#2a6136"/>
      <ellipse cx="69.300" cy="54" rx="3" ry="4.500" fill="#2f4f9a"/>
      <ellipse cx="69.500" cy="48" rx="2.300" ry="2.300" fill="#b9a83a"/>
      <!-- table -->
      <ellipse cx="72" cy="101" rx="64" ry="26" fill="#d8b06d"/>
      <polygon points="8,116 24,90 128,84 134,116" fill="#d8b06d"/>
      <ellipse cx="112" cy="88" rx="18" ry="8" fill="#e0bd7e"/>
      <!-- people -->
      <rect x="18" y="69" width="14" height="20" rx="4" fill="#25282b"/>
      <ellipse cx="43" cy="74" rx="15" ry="14" fill="#5d6063"/>
      <ellipse cx="44" cy="57" rx="6.500" ry="7.500" fill="#524d49"/>
      <ellipse cx="45" cy="62" rx="5" ry="4" fill="#9fb0bc"/>
      <ellipse cx="52" cy="83" rx="5" ry="2.500" fill="#b08a74"/>
      <ellipse cx="76" cy="69" rx="12.500" ry="8" fill="#363b42"/>
      <ellipse cx="77" cy="57.500" rx="4.500" ry="5" fill="#2f2a27"/>
      <ellipse cx="77" cy="61" rx="3" ry="3" fill="#a98c7c"/>
      <path d="M76.500 64l-2.500 11" stroke="#e6e6e6" stroke-width="2.500"/>
      <rect x="93.500" y="64" width="21.500" height="11" rx="3" fill="#1d1f22"/>
      <ellipse cx="138" cy="50" rx="4" ry="9" fill="#4a4744"/>
      <polygon points="118,90 140,82 140,116 126,116 130,98" fill="#2e3136"/>
      <ellipse cx="119" cy="89" rx="4" ry="2.500" fill="#b08a74"/>
      <!-- items on table -->
      <polygon points="97,75 106,72.500 111,92 102,95" fill="#272a30"/>
      <polygon points="104,93 126,89 129,97 108,101" fill="#1d2025"/>
      <rect x="91" y="68" width="6" height="21" rx="1.500" fill="#a78e6c"/>
      <ellipse cx="66" cy="82" rx="3.500" ry="7" fill="#dfe5e8" opacity=".75"/>
      <ellipse cx="81" cy="80" rx="5.500" ry="6.500" fill="#e4e6e4" opacity=".75"/>
      <polygon points="35,104 50,97.500 69,101 55,110.500" fill="#3565a8"/>
      <polygon points="44,101.500 54,99 64,101.500 53,106" fill="#9fc0e2"/>
      <polygon points="65,105 86,104 91,116 71,116" fill="#17191c"/>
      <polygon points="92,105 113,104 115,116 94,116" fill="#c5cfd8"/>
      <ellipse cx="100" cy="107" rx="5" ry="3" fill="#1a1c1f"/>
      <ellipse cx="7" cy="112" rx="12" ry="14" fill="#1d2740"/>
      <ellipse cx="2" cy="86" rx="4.500" ry="10" fill="#e2e2e4"/>
    </g>
    <text x="93" y="41.300" font-family="Liberation Sans, sans-serif" font-weight="bold" font-size="11.500" fill="#1f2650" stroke="#1f2650" stroke-width=".5" textLength="18.500" lengthAdjust="spacingAndGlyphs" filter="url(#b05)">ITI</text>
    <path d="M94 45.500h32M94 49h36" stroke="#a9adbf" stroke-width="1.400" filter="url(#b05)"/>
  </svg>
  <div class="abs nm" style="left:15.600px;top:84.300px;font-size:13px">Carlos Fortner</div>
</div>

<!-- tile 3: Brenda Sampaio -->
<div class="abs tile" style="left:318.700px">
  <svg class="abs" style="left:48.800px;top:37.500px" width="43" height="43" viewBox="0 0 43 43">
    <defs><clipPath id="cpB"><circle cx="21.500" cy="21.500" r="21"/></clipPath></defs>
    <g clip-path="url(#cpB)"><g filter="url(#b1)">
      <rect width="43" height="43" fill="#d9dcd6"/>
      <rect x="0" y="10" width="12" height="33" fill="#2a2d30"/>
      <rect x="30" y="4" width="13" height="14" fill="#e8ebe8"/>
      <rect x="32" y="18" width="11" height="14" fill="#2f3a2c"/>
      <ellipse cx="21" cy="22" rx="13" ry="17" fill="#7a5238"/>
      <ellipse cx="22" cy="19" rx="7" ry="9" fill="#dcae92"/>
      <ellipse cx="21.500" cy="34" rx="10" ry="5" fill="#d6a288"/>
      <ellipse cx="21.500" cy="44" rx="16" ry="8.500" fill="#d6203a"/>
    </g></g>
  </svg>
  <div class="abs badge" style="left:110.500px;top:8px"><svg class="abs" style="left:4px;top:4px" width="15" height="15" fill="#fff"><use href="#i-micoff"/></svg></div>
  <div class="abs nm" style="left:11.300px;top:86.300px;font-size:12.800px;text-shadow:none">Brenda Sampaio</div>
</div>

<!-- tile 4: Carlos Fortner (apresentação) -->
<div class="abs tile" style="left:469.700px">
  <svg class="abs" style="left:0;top:19px" width="140" height="78" viewBox="0 0 140 78">
    <rect width="140" height="78" fill="#fff"/>
    <g filter="url(#b05)">
      <rect width="140" height="1.200" fill="#111"/>
      <rect y="1" width="140" height="7.500" fill="#2b579a"/>
      <rect y="8.500" width="140" height="13" fill="#f1f0ef"/>
      <rect x="8" y="4.500" width="8" height="4" fill="#dfe6f2"/>
      <path d="M20 6.500h12M36 6.500h8M48 6.500h18M70 6.500h6M80 6.500h10M96 6.500h16M128 6.500h10" stroke="#7f9ccb" stroke-width="1.200"/>
      <path d="M6 13h4M20 12h8M38 12.500h14M56 13h18M82 12h22M108 12.500h16M10 17h12M36 16.500h8M60 17h12M86 16.500h18M110 17h12" stroke="#a8a7a6" stroke-width="1.300"/>
      <rect x="0" y="21.500" width="7" height="55" fill="#e9e8e7"/>
      <rect x="125" y="21.500" width="15" height="55" fill="#ececeb"/>
      <rect x="130.500" y="21.500" width=".8" height="55" fill="#d0d0d0"/>
      <rect y="74.500" width="140" height="3.500" fill="#e3e2e1"/>
      <path d="M18 28h6M18 30h8" stroke="#b6bccd" stroke-width="1"/>
      <path d="M52 28.500h32M70 31h14" stroke="#b5b5b5" stroke-width="1"/>
      <path d="M34 35.500h30" stroke="#a2a2a2" stroke-width="1.100"/>
      <path d="M17 42.500h70M19 46h8" stroke="#4a4a4a" stroke-width="1.300"/>
      <path d="M17 54h68M19 57.500h8" stroke="#555" stroke-width="1.200"/>
      <path d="M17 66h66M19 69h66M17 72.500h64" stroke="#555" stroke-width="1.200"/>
    </g>
  </svg>
  <div class="abs badge" style="left:109px;top:8px"><svg class="abs" style="left:4px;top:4px" width="15" height="15" fill="#fff"><use href="#i-voloff"/></svg></div>
  <div class="abs nm" style="left:14.900px;top:68.200px;font-size:13px;line-height:19px;white-space:normal;width:110px;text-shadow:0 0 3px rgba(0,0,0,.55),0 0 1px rgba(0,0,0,.6)">Carlos Fortner (apresentação)</div>
</div>

<!-- tile 5: Mais 3 pessoas -->
<div class="abs tile" style="left:621.200px">
  <svg class="abs" style="left:44px;top:30.500px" width="30" height="29" viewBox="0 0 30 29">
    <defs><clipPath id="cpM"><circle cx="14.500" cy="14.300" r="13.500"/></clipPath></defs>
    <g clip-path="url(#cpM)"><g filter="url(#b1)">
      <rect width="30" height="29" fill="#d6e0e4"/><rect x="0" y="0" width="30" height="9" fill="#4a433e"/><ellipse cx="14.500" cy="15.500" rx="10.500" ry="12.500" fill="#c39b8c"/><ellipse cx="14.500" cy="8" rx="8" ry="3.500" fill="#8a6a5e"/><path d="M9 11.500h4M16 11.500h4" stroke="#3e2e28" stroke-width="1.300"/><ellipse cx="14.500" cy="20.500" rx="5.500" ry="3" fill="#8d6358"/><ellipse cx="14.500" cy="31" rx="14" ry="4.500" fill="#6f7a86"/>
    </g></g>
  </svg>
  <div class="abs" style="left:71px;top:30.800px;width:28px;height:28px;border-radius:14px;background:#0f9d8a;color:#fff;font-size:15px;text-align:center;line-height:28px">J</div>
  <div class="abs nm" style="left:23.500px;top:69px;font-size:12.800px;color:#e8eaed;text-shadow:none">Mais 3 pessoas</div>
</div>

<!-- tile 6: Você -->
<div class="abs tile" style="left:773px">
  <svg class="abs" style="left:0;top:19px" width="140" height="79.500" viewBox="0 0 140 79.500">
    <rect width="140" height="79.500" fill="#cacccb"/>
    <g filter="url(#b1)">
      <polygon points="0,0 140,0 140,8 20,14 0,10" fill="#d0d2d0"/>
      <path d="M2 3h26M6 6h24" stroke="#eef3f8" stroke-width="2.400"/>
      <path d="M16 20L140 24" stroke="#b3b5b4" stroke-width="1"/>
      <path d="M20 55L140 57" stroke="#a9abaa" stroke-width="1.200"/>
      <path d="M16 36L120 32" stroke="#b9bbba" stroke-width="1"/>
      <polygon points="121,8 140,8 140,79.500 128,79.500" fill="#d3d7d6"/>
      <path d="M119 6 L133 79" stroke="#7b8380" stroke-width="1.800" stroke-dasharray="2 1.500"/>
      <!-- poster -->
      <polygon points="41.500,17 92.500,15.500 93,53 44,55.500" fill="#e6e8e6"/>
      <ellipse cx="72" cy="35" rx="16.500" ry="16" fill="#e9e3d4"/>
      <ellipse cx="72" cy="35" rx="11" ry="10.500" fill="#d8dfe6"/>
      <ellipse cx="48" cy="36" rx="6" ry="9" fill="#5d9bd8"/>
      <ellipse cx="56" cy="34" rx="4" ry="6" fill="#9cc4e8"/>
      <circle cx="76" cy="36" r="2.200" fill="#30343a"/>
      <circle cx="66" cy="35" r="2.500" fill="#7f9fd0"/>
      <circle cx="80" cy="26" r="1.800" fill="#e1b24a"/><circle cx="64" cy="46" r="1.800" fill="#e1b24a"/><circle cx="84" cy="44" r="1.800" fill="#6aa0d8"/><circle cx="73" cy="24" r="1.500" fill="#d9c14a"/><circle cx="80" cy="48" r="1.600" fill="#e0a040"/>
      <rect x="116" y="30" width="3" height="4" fill="#5a5a52"/>
      <rect x="114" y="57" width="4.500" height="6" fill="#e6e9e8"/>
      <!-- person -->
      <ellipse cx="4" cy="29" rx="13" ry="19" fill="#b89d91"/>
      <ellipse cx="0" cy="30" rx="5" ry="14" fill="#d6cbc4"/>
      <ellipse cx="4" cy="14" rx="13" ry="6.500" fill="#5d5750"/>
      <ellipse cx="14" cy="22" rx="2.500" ry="7" fill="#6a625b"/>
      <polygon points="0,44 14,40 22,46 0,60" fill="#b9c7d6"/>
      <polygon points="0,56 17,41 42,52 50,68 60,79.500 0,79.500" fill="#44484e"/>
      <polygon points="0,62 15,47 20,79.500 0,79.500" fill="#33373c"/>
      <!-- chair -->
      <rect x="65.500" y="70" width="34" height="12" rx="3" fill="#141518"/>
    </g>
  </svg>
  <div class="abs badge" style="left:109px;top:8px"><svg class="abs" style="left:4px;top:4px" width="15" height="15" fill="#fff"><use href="#i-micoff"/></svg></div>
  <div class="abs nm" style="left:15px;top:84px;font-size:13.400px">Você</div>
</div>


<div id="title" class="abs">PLANEJAMENTO ESTRATÉGICO - REVISÃO</div>

<div class="abs cbtn" style="left:513px;background:#ea4335"><svg class="abs" style="left:9.500px;top:9px" width="19" height="19" fill="#fff" fill-opacity=".8"><use href="#i-micoff-o"/></svg></div>
<div class="abs cbtn" style="left:562px;background:#3c4043"><svg class="abs" style="left:9px;top:8px" width="20" height="20" fill="#e8eaed"><use href="#i-cam"/></svg></div>
<div class="abs cbtn" style="left:611px;background:#8ab4f8"><svg class="abs" style="left:8px;top:7.500px" width="22" height="22" fill="#202124"><use href="#i-present"/></svg></div>
<div class="abs cbtn" style="left:660px;background:#3c4043"><svg class="abs" style="left:7px;top:6.500px" width="24" height="24" fill="#fff"><use href="#i-more"/></svg></div>
<div class="abs cbtn" style="left:708px;width:53px;background:#ea4335"><svg class="abs" style="left:15px;top:7px" width="23" height="23" fill="#fff"><use href="#i-callend"/></svg></div>


<div id="panel" class="abs">
<div class="abs" style="left:22.4px;top:21px;font-size:16px;color:#3c4043">Pessoas</div>
<svg class="abs" style="left:299.0px;top:18px" width="24" height="24" fill="#5f6368"><use href="#i-close"/></svg>
<svg class="abs" style="left:51.5px;top:76.500px" width="22" height="22" fill="#5f6368"><use href="#i-micoff-o"/></svg>
<svg class="abs" style="left:157.0px;top:76px" width="23" height="23" fill="#5f6368"><use href="#i-padd"/></svg>
<svg class="abs" style="left:262.0px;top:75.500px" width="24" height="24" fill="#5f6368"><use href="#i-toggle"/></svg>
<div class="abs pl" style="left:2.7px">Desativar o<br>som de todos</div>
<div class="abs pl" style="left:108.5px">Adic.<br>pessoas</div>
<div class="abs pl" style="left:214.0px">Controles do<br>organizador</div>
<div class="abs row" style="top:183.7px">
<svg class="abs" style="left:19.500px;top:-14.500px" width="29" height="29" viewBox="0 0 29 29"><defs><clipPath id="cpa0"><circle cx="14.500" cy="14.500" r="14.300"/></clipPath></defs><g clip-path="url(#cpa0)"><g filter="url(#b05)"><rect width="29" height="29" fill="#e6e8eb"/><ellipse cx="14.500" cy="31" rx="14" ry="8.500" fill="#1f2a44"/><polygon points="11,23.500 18,23.500 14.500,29" fill="#eef0f3"/><rect x="11.500" y="19" width="6" height="6" fill="#c99473"/><ellipse cx="14.500" cy="14" rx="7.200" ry="8.600" fill="#d9a584"/><path d="M6.800 12.500c-.800-10 16.200-10 15.400 0c-1.200-4-3-5.200-7.700-5.200s-6.500 1.200-7.700 5.200z" fill="#6a4831"/><path d="M11.300 17.300q3.200 2.600 6.400 0z" fill="#fff"/><path d="M10.500 12.300h2.500M16 12.300h2.500" stroke="#5a3b2a" stroke-width=".9"/></g></g></svg>
<div class="abs rn" style="top:-15px">Carlos Fortner (Você)</div><div class="abs rs" style="top:1.500px">Organizador da reunião</div>
<svg class="abs" style="left:236px;top:-11.500px" width="23" height="23" fill="#5f6368"><use href="#i-micoff-o"/></svg>
<svg class="abs" style="left:282px;top:-11px" width="21" height="21" fill="#3c4043"><use href="#i-pin-o"/></svg>
</div>
<div class="abs row" style="top:236.0px">
<svg class="abs" style="left:19.500px;top:-14.500px" width="29" height="29" viewBox="0 0 29 29"><defs><clipPath id="cpa1"><circle cx="14.500" cy="14.500" r="14.300"/></clipPath></defs><g clip-path="url(#cpa1)"><g filter="url(#b05)"><rect width="29" height="29" fill="#e6e8eb"/><ellipse cx="14.500" cy="31" rx="14" ry="8.500" fill="#1f2a44"/><polygon points="11,23.500 18,23.500 14.500,29" fill="#eef0f3"/><rect x="11.500" y="19" width="6" height="6" fill="#c99473"/><ellipse cx="14.500" cy="14" rx="7.200" ry="8.600" fill="#d9a584"/><path d="M6.800 12.500c-.800-10 16.200-10 15.400 0c-1.200-4-3-5.200-7.700-5.200s-6.500 1.200-7.700 5.200z" fill="#6a4831"/><path d="M11.300 17.300q3.200 2.600 6.400 0z" fill="#fff"/><path d="M10.500 12.300h2.500M16 12.300h2.500" stroke="#5a3b2a" stroke-width=".9"/></g></g></svg>
<div class="abs rn" style="top:-15px">Carlos Fortner</div><div class="abs rs" style="top:1.500px">Sua apresentação</div>
<svg class="abs" style="left:236px;top:-11.500px" width="23" height="23" fill="#5f6368"><use href="#i-voloff-o"/></svg>
<svg class="abs" style="left:282px;top:-11px;color:#1a73e8" width="21" height="21" fill="#1a73e8"><use href="#i-pinoff"/></svg>
</div>
<div class="abs row" style="top:288.3px">
<svg class="abs" style="left:19.500px;top:-14.500px" width="29" height="29" viewBox="0 0 29 29"><defs><clipPath id="cpa2"><circle cx="14.500" cy="14.500" r="14.300"/></clipPath></defs><g clip-path="url(#cpa2)"><g filter="url(#b05)"><rect width="29" height="29" fill="#d9dcd6"/><rect x="0" y="6" width="8" height="23" fill="#2a2d30"/><rect x="21" y="12" width="8" height="10" fill="#2f3a2c"/><ellipse cx="14.500" cy="15" rx="9" ry="12" fill="#7a5238"/><ellipse cx="15" cy="13" rx="4.800" ry="6" fill="#dcae92"/><ellipse cx="14.500" cy="23" rx="7" ry="3.500" fill="#d6a288"/><ellipse cx="14.500" cy="30" rx="11" ry="5.500" fill="#d6203a"/></g></g></svg>
<div class="abs rn" style="top:-7px">Brenda Sampaio</div>
<svg class="abs" style="left:236px;top:-11.500px" width="23" height="23" fill="#5f6368"><use href="#i-micoff-o"/></svg>
<svg class="abs" style="left:281px;top:-12px" width="24" height="24" fill="#5f6368"><use href="#i-more"/></svg>
</div>
<div class="abs row" style="top:340.6px">
<svg class="abs" style="left:19.500px;top:-14.500px" width="29" height="29" viewBox="0 0 29 29"><defs><clipPath id="cpa3"><circle cx="14.500" cy="14.500" r="14.300"/></clipPath></defs><g clip-path="url(#cpa3)"><g filter="url(#b05)"><rect width="29" height="29" fill="#e6e8eb"/><ellipse cx="14.500" cy="31" rx="14" ry="8.500" fill="#1f2a44"/><polygon points="11,23.500 18,23.500 14.500,29" fill="#eef0f3"/><rect x="11.500" y="19" width="6" height="6" fill="#c99473"/><ellipse cx="14.500" cy="14" rx="7.200" ry="8.600" fill="#d9a584"/><path d="M6.800 12.500c-.800-10 16.200-10 15.400 0c-1.200-4-3-5.200-7.700-5.200s-6.500 1.200-7.700 5.200z" fill="#6a4831"/><path d="M11.300 17.300q3.200 2.600 6.400 0z" fill="#fff"/><path d="M10.500 12.300h2.500M16 12.300h2.500" stroke="#5a3b2a" stroke-width=".9"/></g></g></svg>
<div class="abs rn" style="top:-15px">Carlos Fortner</div><div class="abs rs" style="top:1.500px">Organizador da reunião</div>
<div class="abs" style="left:236px;top:-11.500px;width:23px;height:23px;border-radius:12px;background:#1a73e8"><i class="abs dt" style="left:4.700px"></i><i class="abs dt" style="left:9.700px"></i><i class="abs dt" style="left:14.700px"></i></div>
<svg class="abs" style="left:281px;top:-12px" width="24" height="24" fill="#5f6368"><use href="#i-more"/></svg>
</div>
<div class="abs row" style="top:392.9px">
<svg class="abs" style="left:19.500px;top:-14.500px" width="29" height="29" viewBox="0 0 29 29"><defs><clipPath id="cpa4"><circle cx="14.500" cy="14.500" r="14.300"/></clipPath></defs><g clip-path="url(#cpa4)"><g filter="url(#b05)"><rect width="29" height="29" fill="#e6e8eb"/><ellipse cx="14.500" cy="31" rx="14" ry="8.500" fill="#1f2a44"/><polygon points="11,23.500 18,23.500 14.500,29" fill="#eef0f3"/><rect x="11.500" y="19" width="6" height="6" fill="#c99473"/><ellipse cx="14.500" cy="14" rx="7.200" ry="8.600" fill="#d9a584"/><path d="M6.800 12.500c-.800-10 16.200-10 15.400 0c-1.200-4-3-5.200-7.700-5.200s-6.500 1.200-7.700 5.200z" fill="#6a4831"/><path d="M11.300 17.300q3.200 2.600 6.400 0z" fill="#fff"/><path d="M10.500 12.300h2.500M16 12.300h2.500" stroke="#5a3b2a" stroke-width=".9"/></g></g></svg>
<div class="abs rn" style="top:-15px">Carlos Fortner</div><div class="abs rs" style="top:1.500px">Apresentação</div>
<svg class="abs" style="left:236px;top:-11.500px" width="23" height="23" fill="#5f6368"><use href="#i-voloff-o"/></svg>
<svg class="abs" style="left:281px;top:-12px" width="24" height="24" fill="#5f6368"><use href="#i-more"/></svg>
</div>
<div class="abs row" style="top:445.2px">
<svg class="abs" style="left:19.500px;top:-14.500px" width="29" height="29" viewBox="0 0 29 29"><defs><clipPath id="cpa5"><circle cx="14.500" cy="14.500" r="14.300"/></clipPath></defs><g clip-path="url(#cpa5)"><g filter="url(#b05)"><rect width="29" height="29" fill="#b4b8b4"/><path d="M0 20C2 6 18 0 29 6V0H0z" fill="#5a544e"/><ellipse cx="8" cy="11" rx="9" ry="8" fill="#6b655f"/><ellipse cx="24" cy="18" rx="6" ry="9" fill="#d9dcd8"/><ellipse cx="15" cy="15" rx="4" ry="4.500" fill="#c9a592"/><ellipse cx="15" cy="11.500" rx="4" ry="2" fill="#55473e"/><ellipse cx="14.500" cy="25" rx="8" ry="6" fill="#eceeee"/></g></g></svg>
<div class="abs rn" style="top:-7px">Cláudio Lima</div>
<div class="abs" style="left:236px;top:-11.500px;width:23px;height:23px;border-radius:12px;background:#1a73e8"><i class="abs br" style="left:5.300px;top:8.500px;height:6px"></i><i class="abs br" style="left:10px;top:6px;height:11px"></i><i class="abs br" style="left:14.700px;top:8.500px;height:6px"></i></div>
<svg class="abs" style="left:281px;top:-12px" width="24" height="24" fill="#5f6368"><use href="#i-more"/></svg>
</div>
<div class="abs row" style="top:497.5px">
<div class="abs av" style="background:#c2185b">G</div>
<div class="abs rn" style="top:-7px">Giordanno</div>
<svg class="abs" style="left:236px;top:-11.500px" width="23" height="23" fill="#5f6368"><use href="#i-micoff-o"/></svg>
<svg class="abs" style="left:281px;top:-12px" width="24" height="24" fill="#5f6368"><use href="#i-more"/></svg>
</div>
<div class="abs row" style="top:549.8px">
<div class="abs av" style="background:#00897b">J</div>
<div class="abs rn" style="top:-7px">Jorge Carvalho de Oliveira</div>
<svg class="abs" style="left:236px;top:-11.500px" width="23" height="23" fill="#5f6368"><use href="#i-micoff-o"/></svg>
<svg class="abs" style="left:281px;top:-12px" width="24" height="24" fill="#5f6368"><use href="#i-more"/></svg>
</div>
<div class="abs row" style="top:602.1px">
<svg class="abs" style="left:19.500px;top:-14.500px" width="29" height="29" viewBox="0 0 29 29"><defs><clipPath id="cpa8"><circle cx="14.500" cy="14.500" r="14.300"/></clipPath></defs><g clip-path="url(#cpa8)"><g filter="url(#b05)"><rect width="29" height="29" fill="#d6e0e4"/><rect x="0" y="0" width="29" height="9" fill="#4a433e"/><ellipse cx="14" cy="15.500" rx="10.500" ry="12.500" fill="#c39b8c"/><ellipse cx="14" cy="8" rx="8" ry="3.500" fill="#8a6a5e"/><path d="M8.500 11.500h4M15.500 11.500h4" stroke="#3e2e28" stroke-width="1.300"/><ellipse cx="14" cy="20.500" rx="5.500" ry="3" fill="#8d6358"/><ellipse cx="14" cy="31" rx="14" ry="4.500" fill="#6f7a86"/></g></g></svg>
<div class="abs rn" style="top:-7px">Mauricio Coelho</div>
<svg class="abs" style="left:236px;top:-11.500px" width="23" height="23" fill="#5f6368"><use href="#i-micoff-o"/></svg>
<svg class="abs" style="left:281px;top:-12px" width="24" height="24" fill="#5f6368"><use href="#i-more"/></svg>
</div>
<div class="abs" style="left:329.0px;top:247px;width:7px;height:381px;background:#dadce0"></div>
</div>

<svg class="abs" style="left:1049px;top:669.500px" width="24" height="24" fill="#fff" stroke="#fff" stroke-width=".5"><use href="#i-info"/></svg>
<svg class="abs" style="left:1093.500px;top:669px" width="24.500" height="24.500" fill="#8ab4f8"><use href="#i-people"/></svg>
<div class="abs" style="left:1106.300px;top:654px;width:19.600px;height:19.600px;border-radius:10px;background:#5f6368;color:#fff;font-size:10px;font-weight:bold;text-align:center;line-height:19.600px">9</div>
<svg class="abs" style="left:1138.500px;top:670px" width="23" height="23" fill="#fff" stroke="#fff" stroke-width=".5"><use href="#i-chat"/></svg>
<div class="abs" style="left:1154.700px;top:667.900px;width:8.600px;height:8.600px;border-radius:5px;background:#8ab4f8"></div>
<svg class="abs" style="left:1184.500px;top:669.500px" width="23" height="23" fill="#fff" stroke="#fff" stroke-width=".6"><use href="#i-cat"/></svg>
<svg class="abs" style="left:1229.500px;top:670.500px" width="22" height="22" fill="#fff" stroke="#fff" stroke-width=".4"><use href="#i-shield"/></svg>

</body>
</html>
